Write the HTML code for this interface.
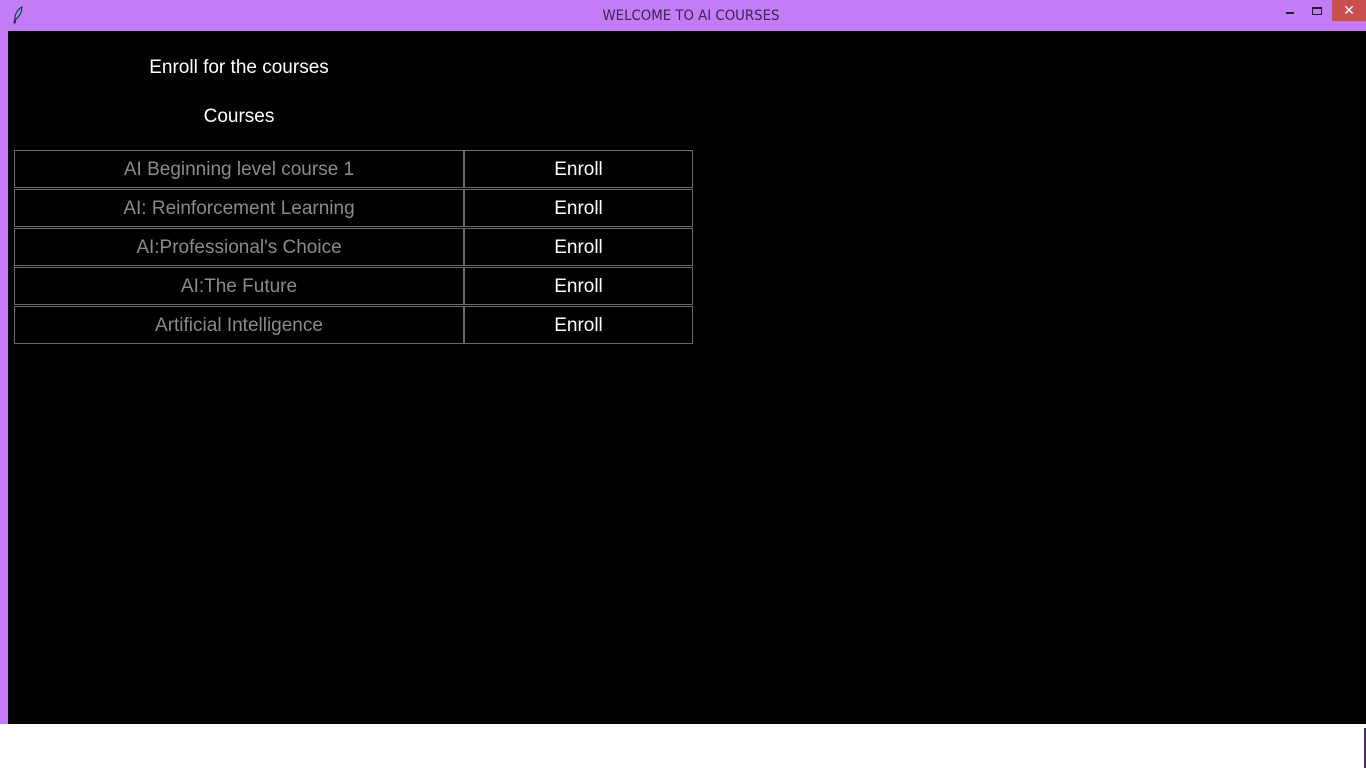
<!DOCTYPE html>
<html><head><meta charset="utf-8"><style>
*{margin:0;padding:0;box-sizing:border-box}
body{width:1366px;height:768px;overflow:hidden;background:#fff;position:relative;font-family:"Liberation Sans",Arial,sans-serif}
.frame{position:absolute;left:0;top:0;width:1366px;height:724px;background:#c27cf6}
.title{position:absolute;top:8px;left:0;width:1382px;text-align:center;font-size:14px;color:#3a2550;font-family:"DejaVu Sans","Liberation Sans",sans-serif;transform:scaleX(0.95)}
.close{position:absolute;right:0;top:0;width:34px;height:21px;background:#c8504f;color:#fff;text-align:center;font-size:14px;line-height:21px}
.min{position:absolute;left:1286px;top:12px;width:8px;height:2px;background:#2a1a3a}
.max{position:absolute;left:1312px;top:7px;width:10px;height:8px;border:1px solid #2a1a3a;border-top-width:2px}
.content{position:absolute;left:8px;top:31px;width:1358px;height:693px;background:#000}
.t{position:absolute;color:#fff;font-size:19px;text-align:center;width:460px;left:9px}
.cell{position:absolute;border:1px solid #6a6a6a;height:38px;padding-top:1px;font-size:19px;line-height:36px;text-align:center}
.c1{left:14px;width:450px;color:#8a8a8a}
.c2{left:464px;width:229px;color:#fff}
.edge{position:absolute;left:1364px;top:728px;width:2px;height:40px;background:#4a2e66}
</style></head><body>
<div class="frame">
<svg style="position:absolute;left:12px;top:6px" width="12" height="18" viewBox="0 0 12 18"><path d="M10 1 C6 3 3 8 3 12 L2 17 L3 17 L4 13 C8 10 10 5 10 1Z" fill="#8fa4d8" stroke="#1a2040" stroke-width="1"/></svg>
<div class="title">WELCOME TO AI COURSES</div>
<div class="min"></div><div class="max"></div>
<div class="close">✕</div>
</div>
<div class="content"></div>
<div class="t" style="top:57px">Enroll for the courses</div>
<div class="t" style="top:106px">Courses</div>
<div class="cell c1" style="top:150px">AI Beginning level course 1</div><div class="cell c2" style="top:150px">Enroll</div>
<div class="cell c1" style="top:189px">AI: Reinforcement Learning</div><div class="cell c2" style="top:189px">Enroll</div>
<div class="cell c1" style="top:228px">AI:Professional's Choice</div><div class="cell c2" style="top:228px">Enroll</div>
<div class="cell c1" style="top:267px">AI:The Future</div><div class="cell c2" style="top:267px">Enroll</div>
<div class="cell c1" style="top:306px">Artificial Intelligence</div><div class="cell c2" style="top:306px">Enroll</div>
<div class="edge"></div>
</body></html>
